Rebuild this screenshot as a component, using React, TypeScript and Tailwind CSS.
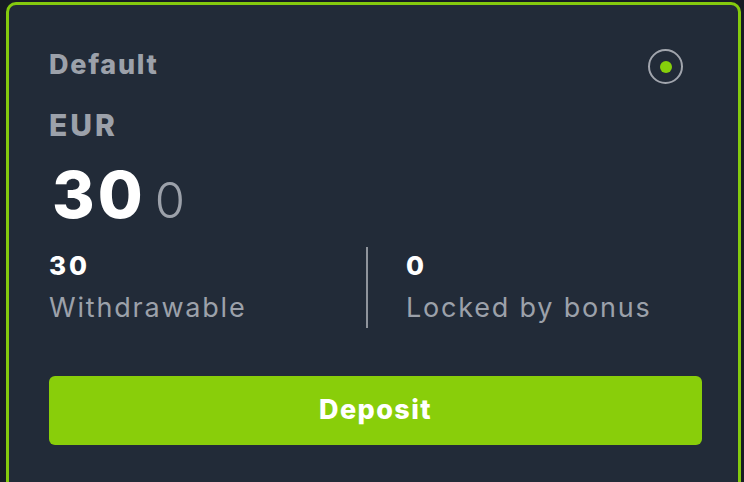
import React from "react";

export default function App() {
  const font = { fontFamily: "Inter, 'Open Sans', sans-serif" };
  return (
    <div className="w-[744px] h-[482px] overflow-hidden bg-[#171c24]" style={font}>
      <div className="ml-[6px] mt-[2px] w-[735px] h-[520px] rounded-[10px] border-[3px] border-[#84ca0e] bg-[#222b38]">
        <div className="flex flex-col pl-[40px]">
          <div className="mt-[47px] flex items-start justify-between pr-[55px] h-[26px]">
            <div className="text-[27px] leading-[26px] font-extrabold text-[#9ca1aa] tracking-[1.7px]">Default</div>
            <div className="-mt-[3px] w-[35px] h-[35px] rounded-full border-2 border-[#a1a5ad] flex items-center justify-center">
              <div className="w-[12px] h-[12px] rounded-full bg-[#86cf0b]" />
            </div>
          </div>
          <div className="mt-[33px] text-[30px] leading-[28px] font-extrabold text-[#9ca1aa] tracking-[3px]">EUR</div>
          <div className="mt-[24px] flex items-baseline leading-[63px] h-[63px]">
            <span className="ml-[3px] text-[65px] font-extrabold text-white tracking-[3px]">30</span>
            <span className="ml-[9px] text-[49px] font-light text-[#9ca1aa] tracking-[1px]">0</span>
          </div>
          <div className="mt-[21px] flex">
            <div className="w-[317px] pt-[6px]">
              <div className="text-[26px] leading-[25px] font-extrabold text-white tracking-[3px]">30</div>
              <div className="mt-[17px] text-[27px] leading-[26px] text-[#9ca1aa] tracking-[1.8px]">Withdrawable</div>
            </div>
            <div className="w-[2px] h-[81px] bg-[#8f949c]" />
            <div className="pl-[38px] pt-[6px]">
              <div className="text-[26px] leading-[25px] font-extrabold text-white tracking-[3px]">0</div>
              <div className="mt-[17px] text-[27px] leading-[26px] text-[#9ca1aa] tracking-[1.8px]">Locked by bonus</div>
            </div>
          </div>
          <button className="mt-[48px] w-[653px] h-[69px] rounded-[6px] bg-[#89ce0a] text-white text-[27px] font-extrabold tracking-[1.4px] flex items-center justify-center">
            Deposit
          </button>
        </div>
      </div>
    </div>
  );
}
